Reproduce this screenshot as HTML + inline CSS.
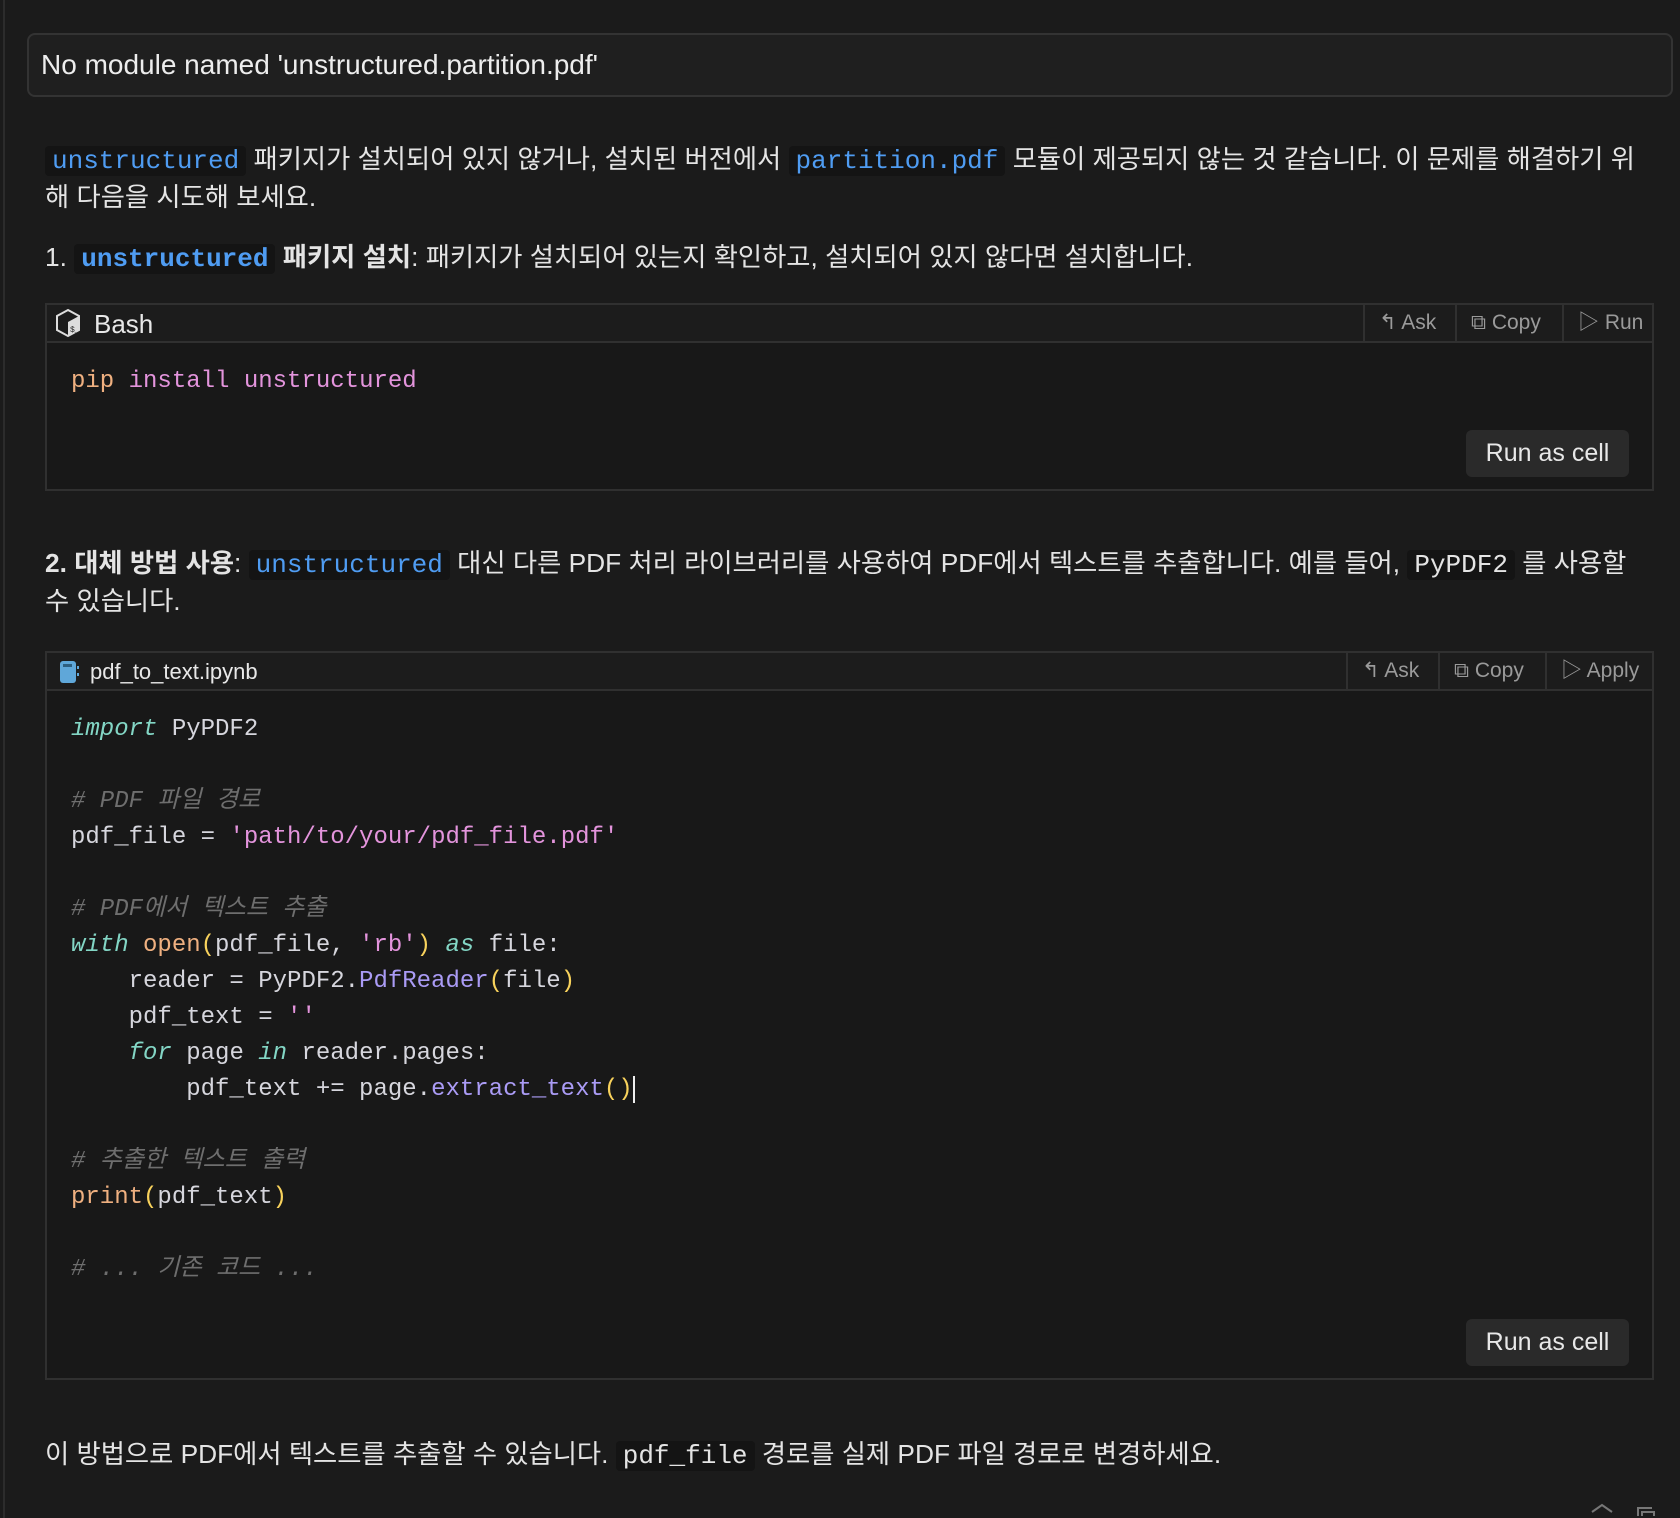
<!DOCTYPE html>
<html><head><meta charset="utf-8">
<style>
*{margin:0;padding:0;box-sizing:border-box}
body{width:1680px;height:1518px;background:#1b1b1b;position:relative;overflow:hidden;font-family:"Liberation Sans","Noto Sans CJK KR",sans-serif;color:#e4e4e4}
.abs{position:absolute;white-space:nowrap}
.vl{position:absolute;left:3px;top:0;width:2px;height:1518px;background:#2c2c2c}
.err{position:absolute;left:27px;top:33px;width:1646px;height:64px;border:2px solid #333;border-radius:8px;background:#1f1f1f}
.t{font-size:26.3px;line-height:37px}
.ic{font-family:"Liberation Mono",monospace;color:#4f9cf2;background:#141414;padding:0 7px;border-radius:4px;font-size:26px}
.icw{font-family:"Liberation Mono",monospace;color:#e4e4e4;background:#141414;padding:0 7px;border-radius:4px;font-size:26px}
.box{position:absolute;left:45px;width:1609px;border:2px solid #303030;background:#181818}
.hdr{position:absolute;left:0;top:0;right:0;height:38px;border-bottom:2px solid #303030;background:#1c1c1c}
.btn{position:absolute;top:0;height:36px;border-left:2px solid #303030;color:#9a9a9a;font-size:21px;line-height:36px;padding-left:14px}
.code{font-family:"Liberation Mono","Noto Sans CJK KR",monospace;font-size:24px;color:#d6d6dd;position:absolute;left:71px;white-space:pre;line-height:36px}
.k{color:#83d6c5;font-style:italic}
.s{color:#e394dc}
.f{color:#efb080}
.m{color:#aa9bf5}
.p{color:#f8d25c}
.c{color:#6e6e6e;font-style:italic}
.rac{position:absolute;width:163px;height:47px;background:#2a2a2a;border-radius:6px;color:#e8e8e8;font-size:25px;line-height:47px;text-align:center}
</style></head><body>
<div class="vl"></div>
<div class="err"></div>
<div class="abs" style="left:41px;top:47px;font-size:28px;line-height:36px;color:#ededed">No module named 'unstructured.partition.pdf'</div>

<div class="abs t" style="left:45px;top:141px"><span class="ic">unstructured</span> 패키지가 설치되어 있지 않거나, 설치된 버전에서 <span class="ic">partition.pdf</span> 모듈이 제공되지 않는 것 같습니다. 이 문제를 해결하기 위</div>
<div class="abs t" style="left:45px;top:179px">해 다음을 시도해 보세요.</div>

<div class="abs t" style="left:45px;top:239px">1. <span class="ic" style="font-weight:bold">unstructured</span> <b>패키지 설치</b>: 패키지가 설치되어 있는지 확인하고, 설치되어 있지 않다면 설치합니다.</div>

<div class="box" style="top:303px;height:188px">
 <div class="hdr">
  <svg style="position:absolute;left:6px;top:3px" width="30" height="30" viewBox="0 0 30 30"><path d="M15 2 L26 8 L26 22 L15 28 L4 22 L4 8 Z" fill="none" stroke="#ddd" stroke-width="2"/><path d="M15 14 L26 8 L26 22 L15 28 Z" fill="#ddd"/><text x="17" y="24" font-size="8" fill="#222" font-family="Liberation Mono">$_</text></svg>
  <div class="abs" style="left:47px;top:0;font-size:26px;line-height:38px;color:#e8e8e8">Bash</div>
  <div class="btn" style="left:1316px;width:92px">↰ Ask</div>
  <div class="btn" style="left:1408px;width:107px">⧉ Copy</div>
  <div class="btn" style="left:1515px;width:92px">▷ Run</div>
 </div>
 <div class="code" style="top:59px;left:24px"><span class="f">pip</span> <span class="s">install unstructured</span></div>
 <div class="rac" style="left:1419px;top:125px">Run as cell</div>
</div>

<div class="abs t" style="left:45px;top:545px"><b>2. 대체 방법 사용</b>: <span class="ic">unstructured</span> 대신 다른 PDF 처리 라이브러리를 사용하여 PDF에서 텍스트를 추출합니다. 예를 들어, <span class="icw">PyPDF2</span> 를 사용할</div>
<div class="abs t" style="left:45px;top:583px">수 있습니다.</div>

<div class="box" style="top:651px;height:729px">
 <div class="hdr">
  <svg style="position:absolute;left:12px;top:7px" width="22" height="24" viewBox="0 0 22 24"><rect x="1" y="1" width="16" height="22" rx="3" fill="#5fa7d9"/><rect x="18" y="6" width="2" height="3" fill="#5fa7d9"/><rect x="18" y="13" width="2" height="3" fill="#5fa7d9"/><rect x="4" y="4" width="9" height="3" fill="#2d5f80"/></svg>
  <div class="abs" style="left:43px;top:0;font-size:22px;line-height:38px;color:#e8e8e8">pdf_to_text.ipynb</div>
  <div class="btn" style="left:1299px;width:92px">↰ Ask</div>
  <div class="btn" style="left:1391px;width:107px">⧉ Copy</div>
  <div class="btn" style="left:1498px;width:109px">▷ Apply</div>
 </div>
 <div class="code" style="top:59px;left:24px"><span class="k">import</span> PyPDF2

<span class="c"># PDF 파일 경로</span>
pdf_file = <span class="s">'path/to/your/pdf_file.pdf'</span>

<span class="c"># PDF에서 텍스트 추출</span>
<span class="k">with</span> <span class="f">open</span><span class="p">(</span>pdf_file, <span class="s">'rb'</span><span class="p">)</span> <span class="k">as</span> file:
    reader = PyPDF2.<span class="m">PdfReader</span><span class="p">(</span>file<span class="p">)</span>
    pdf_text = <span class="s">''</span>
    <span class="k">for</span> page <span class="k">in</span> reader.pages:
        pdf_text += page.<span class="m">extract_text</span><span class="p">()</span><span style="border-left:2px solid #eee"></span>

<span class="c"># 추출한 텍스트 출력</span>
<span class="f">print</span><span class="p">(</span>pdf_text<span class="p">)</span>

<span class="c"># ... 기존 코드 ...</span></div>
 <div class="rac" style="left:1419px;top:666px">Run as cell</div>
</div>

<div class="abs t" style="left:45px;top:1436px">이 방법으로 PDF에서 텍스트를 추출할 수 있습니다. <span class="icw">pdf_file</span> 경로를 실제 PDF 파일 경로로 변경하세요.</div>

<svg class="abs" style="left:1588px;top:1500px" width="80" height="18"><path d="M4 12 L14 5 L24 12" fill="none" stroke="#777" stroke-width="2"/><path d="M50 16 V8 H64 M54 16 V12 H66 V16" fill="none" stroke="#777" stroke-width="2"/></svg>
</body></html>
